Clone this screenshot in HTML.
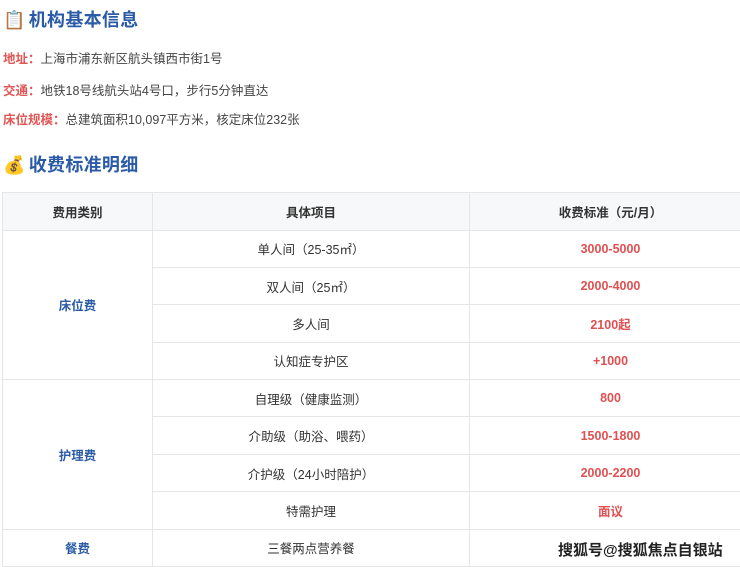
<!DOCTYPE html>
<html><head><meta charset="utf-8"><style>
body{margin:0;width:740px;height:567px;overflow:hidden;background:#fff;font-family:"Liberation Sans","Noto Sans CJK SC",sans-serif;color:#333;}
h2{position:absolute;left:3px;margin:0;font-size:18px;color:#2b5ba6;font-weight:bold;letter-spacing:0.3px;}
h2 span{font-size:18px;margin-right:3px;}
.p{position:absolute;left:3px;font-size:12.5px;color:#444;}
.p b{color:#e05555;font-weight:bold;}
table{position:absolute;left:2px;top:192px;border-collapse:collapse;width:750px;font-size:12.5px;}
td,th{border:1px solid #e6e6e6;text-align:center;height:36.4px;padding:0;}
th{background:#f7f8fa;height:36.5px;font-weight:bold;color:#333;}
.c{color:#2b5ba6;font-weight:bold;}
.r{color:#e05050;font-weight:bold;}
.wm{position:absolute;left:558px;top:539px;font-size:15px;color:#222;font-weight:bold;text-shadow:0 0 2px #fff,0 0 2px #fff;}
</style></head><body>
<h2 style="top:6px"><span>📋</span>机构基本信息</h2>
<div class="p" style="top:48px"><b>地址：</b>上海市浦东新区航头镇西市街1号</div>
<div class="p" style="top:80px"><b>交通：</b>地铁18号线航头站4号口，步行5分钟直达</div>
<div class="p" style="top:109px"><b>床位规模：</b>总建筑面积10,097平方米，核定床位232张</div>
<h2 style="top:151px"><span>💰</span>收费标准明细</h2>
<table>
<tr><th style="width:149px">费用类别</th><th style="width:316px">具体项目</th><th>收费标准（元/月）</th></tr>
<tr><td class="c" rowspan="4">床位费</td><td>单人间（25-35㎡）</td><td class="r">3000-5000</td></tr>
<tr><td>双人间（25㎡）</td><td class="r">2000-4000</td></tr>
<tr><td>多人间</td><td class="r">2100起</td></tr>
<tr><td>认知症专护区</td><td class="r">+1000</td></tr>
<tr><td class="c" rowspan="4">护理费</td><td>自理级（健康监测）</td><td class="r">800</td></tr>
<tr><td>介助级（助浴、喂药）</td><td class="r">1500-1800</td></tr>
<tr><td>介护级（24小时陪护）</td><td class="r">2000-2200</td></tr>
<tr><td>特需护理</td><td class="r">面议</td></tr>
<tr><td class="c">餐费</td><td>三餐两点营养餐</td><td></td></tr>
</table>
<div class="wm">搜狐号@搜狐焦点自银站</div>
</body></html>
